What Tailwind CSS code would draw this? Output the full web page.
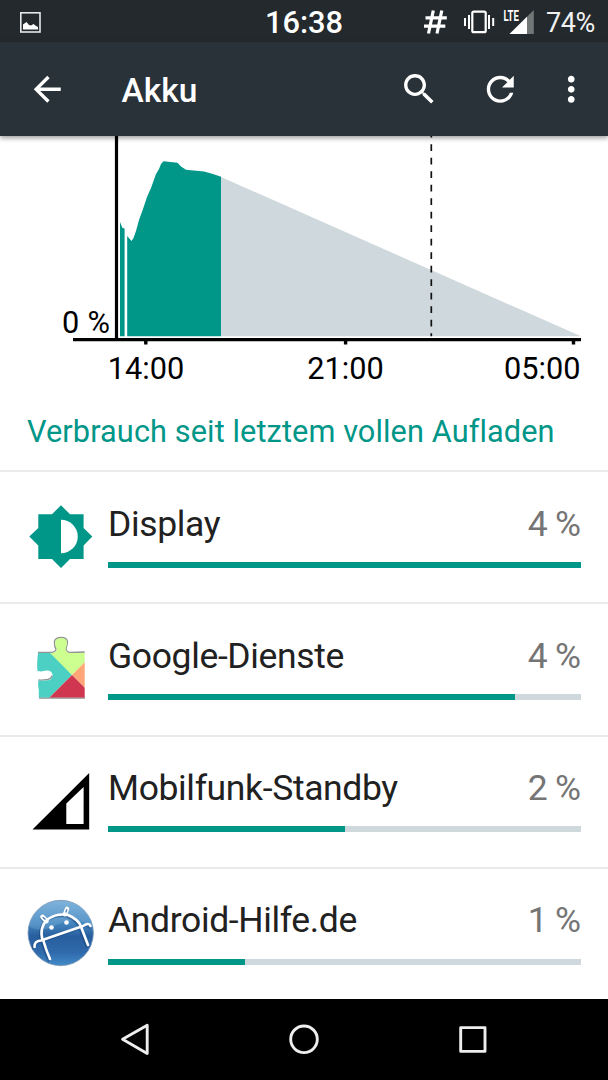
<!DOCTYPE html>
<html lang="de">
<head>
<meta charset="utf-8">
<title>Akku</title>
<script src="https://cdn.jsdelivr.net/npm/@tailwindcss/browser@4"></script>
</head>
<body class="w-[608px] h-[1080px] overflow-hidden bg-white font-[Roboto,sans-serif] text-[#212121] flex flex-col">

<!-- Status bar -->
<div class="h-[42px] shrink-0 bg-[#23292c] grid grid-cols-[203px_202px_203px] items-center text-white">
  <svg class="ml-5 w-[21px] h-[21px]" viewBox="0 0 21 21"><rect x="0.8" y="0.8" width="19.2" height="19.2" fill="none" stroke="#e6e7e8" stroke-width="1.6"/><path d="M3 17.6V12.500L6.500 10L9 13L11 13.500L13.500 12L16 14L18 15V17.600Z" fill="#fff"/></svg>
  <div class="text-center text-[30.8px] leading-[42px] font-medium pt-[2px]">16:38</div>
  <div class="flex items-center h-[42px]">
    <svg class="w-[131px] h-[42px] shrink-0" viewBox="405 0 131 42">
      <g stroke="#fff" fill="none">
        <path d="M433.300 9.500L428.500 32.500M441.800 9.500L437 32.500M425.500 16.800H446.800M424 25.200H445.300" stroke-width="3.200"/>
        <rect x="472.300" y="10.600" width="13.400" height="20.600" rx="1.500" stroke-width="2.200"/>
        <path d="M465 17V25M469 14V28M489 14V28M493.200 17V25" stroke-width="2"/>
      </g>
      <text x="503.500" y="20.200" font-size="14.200" font-weight="700" fill="#fff" textLength="15.400" lengthAdjust="spacingAndGlyphs">LTE</text>
      <path d="M509.500 33L533.800 9V33Z" fill="#727677"/>
      <path d="M509.500 33L527 15.700V33Z" fill="#fff"/>
    </svg>
    <div class="ml-[10px] text-[27px] leading-[42px] pt-[2px] tracking-[-0.4px] text-[#f1f1f1] whitespace-nowrap">74%</div>
  </div>
</div>

<!-- App bar -->
<div class="relative z-10 h-[94px] shrink-0 bg-[#283238] flex items-center text-white shadow-[0_2px_5px_rgba(0,0,0,0.4)]">
  <svg class="ml-[27px] w-[40.500px] h-[40.500px]" viewBox="0 0 24 24" fill="#fff"><path d="M20 11H7.830l5.590-5.590L12 4l-8 8 8 8 1.410-1.410L7.830 13H20v-2z"/></svg>
  <div class="ml-[54px] text-[33.500px] leading-[40px] font-medium pt-[3px] w-[277px]">Akku</div>
  <svg class="w-[40.500px] h-[40.500px]" viewBox="0 0 24 24" fill="#fff"><path d="M15.500 14h-.790l-.280-.270C15.410 12.590 16 11.110 16 9.500 16 5.910 13.090 3 9.500 3S3 5.910 3 9.500 5.910 16 9.500 16c1.610 0 3.090-.590 4.230-1.570l.270.280v.790l5 4.990L20.490 19l-4.990-5zm-6 0C7.010 14 5 11.990 5 9.500S7.010 5 9.500 5 14 7.010 14 9.500 11.990 14 9.500 14z"/></svg>
  <svg class="ml-[40.500px] w-[40.500px] h-[40.500px]" viewBox="0 0 24 24" fill="#fff"><path d="M17.650 6.350C16.200 4.900 14.210 4 12 4c-4.420 0-7.990 3.580-7.990 8s3.570 8 7.990 8c3.730 0 6.840-2.550 7.730-6h-2.080c-.820 2.330-3.040 4-5.650 4-3.310 0-6-2.690-6-6s2.690-6 6-6c1.660 0 3.140.690 4.220 1.780L13 11h7V4l-2.350 2.350z"/></svg>
  <svg class="ml-[30.500px] w-[40.500px] h-[40.500px]" viewBox="0 0 24 24" fill="#fff"><path d="M12 8c1.100 0 2-.900 2-2s-.900-2-2-2-2 .900-2 2 .900 2 2 2zm0 2c-1.100 0-2 .900-2 2s.900 2 2 2 2-.900 2-2-.900-2-2-2zm0 6c-1.100 0-2 .900-2 2s.900 2 2 2 2-.900 2-2-.900-2-2-2z"/></svg>
</div>

<!-- Battery history -->
<svg class="w-[608px] h-[260px] shrink-0" viewBox="0 136 608 260">
  <path d="M221 177L581 336.300H221Z" fill="#cfd8dc"/>
  <path d="M120 222L122.500 228L124.600 228.500V336.300H120Z" fill="#009688"/>
  <path d="M127.200 236L131.500 241L133.500 238L136 231L139 220L143 209L147 197L151 188L156 174L159 169L161 164L163.500 161.300L177.500 162.800L181 166.500L186 169.800L204 171.500L213 174L221 176.700V336.300H127.200Z" fill="#009688"/>
  <path d="M431.300 133V336.300" stroke="#111" stroke-width="1.700" stroke-dasharray="6.800 6.700" stroke-dashoffset="2.200"/>
  <path d="M116.500 136V340M73 339.600H581" stroke="#000" stroke-width="3.200" fill="none"/>
  <path d="M145.800 340V344.500M345.600 340V344.500M573.500 340V344.500" stroke="#000" stroke-width="3.400"/>
  <g font-size="30.700" fill="#000">
    <text x="62" y="332.700" textLength="48">0 %</text>
    <text x="146" y="378.600" text-anchor="middle">14:00</text>
    <text x="345.500" y="378.600" text-anchor="middle">21:00</text>
    <text x="580.500" y="378.600" text-anchor="end">05:00</text>
  </g>
</svg>

<div class="h-[74px] shrink-0 pl-[27px] leading-[72px] text-[30.700px] tracking-[0.1px] [font-variant-ligatures:none] text-[#009688] whitespace-nowrap">Verbrauch seit letztem vollen Aufladen</div>

<!-- Consumers -->
<div class="h-[529px] shrink-0 grid grid-rows-4">
  <div class="flex border-t-2 border-[#ebebeb] pl-[20px] pr-[27px]">
    <svg class="w-[88px] h-[100px] shrink-0 mt-[14px]" viewBox="20 486 88 100"><path d="M38.300 514.300H52L61 505.200L70 514.300H83.600V528L92.300 536.500L83.600 545.500V559H70L61 568L52 559H38.300V545.500L29.300 536.500L38.300 528Z" fill="#009688"/><path d="M61 519.700A16.800 16.800 0 0 1 61 553.300Z" fill="#fff"/></svg>
    <div class="flex-1">
      <div class="mt-[31px] flex justify-between text-[35.500px] leading-[42px] tracking-[-0.36px]"><span>Display</span><span class="text-[#757575] tracking-[-0.7px] pr-[0.7px]">4 %</span></div>
      <div class="mt-[17px] h-[6px] bg-[#cfd8dc]"><div class="h-full bg-[#009688]" style="width:100%"></div></div>
    </div>
  </div>
  <div class="flex border-t-2 border-[#ebebeb] pl-[20px] pr-[27px]">
    <svg class="w-[88px] h-[100px] shrink-0 mt-[14px]" viewBox="20 618 88 100">
      <defs><clipPath id="piece"><path d="M38 653H51Q57 653 57 649Q55 646 55 642Q56 638 61 638Q67 638 67 643Q67 646 65.500 648Q66 653 70 653H84.700V697.500H38.800V690Q37.500 684 38.500 680.500C42 681 44 680.500 47 680.500C54.500 680 54.500 670 46.500 670.500C43 671 42 672 37.500 671Q36.500 664 38 653Z"/></clipPath></defs>
      <path d="M38 652.500H51Q56 652 56 649Q54 646 54.500 641Q56 637.500 61 637.500Q67 637.500 67.500 642Q67 646 66 648Q66 652.500 70 652.500L84.700 652M38.500 680C42 680.500 44 679.500 47 679.700Q51 679 52.500 675.500M39 698H85" stroke="#929292" stroke-width="1.400" fill="none"/>
      <g clip-path="url(#piece)"><path d="M30 630H52V653L72 675L49 698H30Z" fill="#4dd0c4"/><path d="M52 630H90V657L72 675L50 653Z" fill="#ccff90"/><path d="M72 675L90 657V693Z" fill="#ffa679"/><path d="M72 675L90 693V698H49Z" fill="#d0364f"/></g>
    </svg>
    <div class="flex-1">
      <div class="mt-[31px] flex justify-between text-[35.500px] leading-[42px] tracking-[-0.36px]"><span>Google-Dienste</span><span class="text-[#757575] tracking-[-0.7px] pr-[0.7px]">4 %</span></div>
      <div class="mt-[17px] h-[6px] bg-[#cfd8dc]"><div class="h-full bg-[#009688]" style="width:86%"></div></div>
    </div>
  </div>
  <div class="flex border-t-2 border-[#ebebeb] pl-[20px] pr-[27px]">
    <svg class="w-[88px] h-[100px] shrink-0 mt-[14px]" viewBox="20 750.500 88 100"><path d="M32.500 829L89.200 772.500V829Z" fill="#000"/><path d="M66.300 803L83.600 786.500V823.500H66.300Z" fill="#fff"/></svg>
    <div class="flex-1">
      <div class="mt-[30px] flex justify-between text-[35.500px] leading-[42px] tracking-[-0.36px]"><span>Mobilfunk-Standby</span><span class="text-[#757575] tracking-[-0.7px] pr-[0.7px]">2 %</span></div>
      <div class="mt-[17.500px] h-[6px] bg-[#cfd8dc]"><div class="h-full bg-[#009688]" style="width:50%"></div></div>
    </div>
  </div>
  <div class="flex border-t-2 border-[#ebebeb] pl-[20px] pr-[27px]">
    <svg class="w-[88px] h-[100px] shrink-0 mt-[14px]" viewBox="20 883 88 100">
      <defs><linearGradient id="ball" x1="0" y1="0" x2="0" y2="1"><stop offset="0" stop-color="#75acd8"/><stop offset=".35" stop-color="#4487c0"/><stop offset=".55" stop-color="#285e9e"/><stop offset=".8" stop-color="#2f6aac"/><stop offset="1" stop-color="#438bc8"/></linearGradient></defs>
      <circle cx="60.700" cy="933" r="32.700" fill="url(#ball)" stroke="#7c98b5" stroke-width=".8"/>
      <path d="M29 926Q40 934 56 925Q75 916 92 926Q88 902 61 901Q34 902 29 926Z" fill="#a9d0eb" opacity=".2"/>
      <g fill="none" stroke="#173f73" stroke-opacity=".45" stroke-width="3" stroke-linecap="round" transform="translate(-1.300 1.300)"><path d="M42.500 940Q39 927 48 919Q57 913 68 915Q78 919 81.500 927M46.500 921L42.500 917M65 914L67 908.500M34.500 947Q34 941 41 940.500L83 926Q89 922 90.500 926M43.500 941Q46 950 50 959M81.500 928L88 945"/></g>
      <g fill="none" stroke="#fff" stroke-width="2.600" stroke-linecap="round" stroke-linejoin="round"><path d="M42.500 940Q39 927 48 919Q57 913 68 915Q78 919 81.500 927M34.500 947Q34 941 41 940.500L83 926Q89 922 90.500 926M43.500 941Q46 950 50 959M81.500 928L88 945"/><path d="M46.500 921L42.500 917M65 914L67 909" stroke-width="4.600"/></g>
      <path d="M45.500 919.500L42.700 917.200M65.700 912.500L67 909.200" stroke="#3c79b4" stroke-width="1.200"/>
      <circle cx="51.500" cy="927.500" r="2.300" fill="#fff"/><circle cx="66.500" cy="922.500" r="2.300" fill="#fff"/>
    </svg>
    <div class="flex-1">
      <div class="mt-[30px] flex justify-between text-[35.500px] leading-[42px] tracking-[-0.36px]"><span>Android-Hilfe.de</span><span class="text-[#757575] tracking-[-0.7px] pr-[0.7px]">1 %</span></div>
      <div class="mt-[18px] h-[6px] bg-[#cfd8dc]"><div class="h-full bg-[#009688]" style="width:29%"></div></div>
    </div>
  </div>
</div>

<!-- Navigation bar -->
<div class="h-[81px] shrink-0 bg-black">
  <svg class="w-[608px] h-[81px]" viewBox="0 999 608 81" fill="none" stroke="#eee" stroke-width="2.900" stroke-linejoin="round"><path d="M122.600 1039.300L147.200 1025.200V1053.500Z"/><circle cx="304" cy="1039.300" r="13.300"/><rect x="460.700" y="1027.600" width="24.300" height="23.800"/></svg>
</div>
</body>
</html>
